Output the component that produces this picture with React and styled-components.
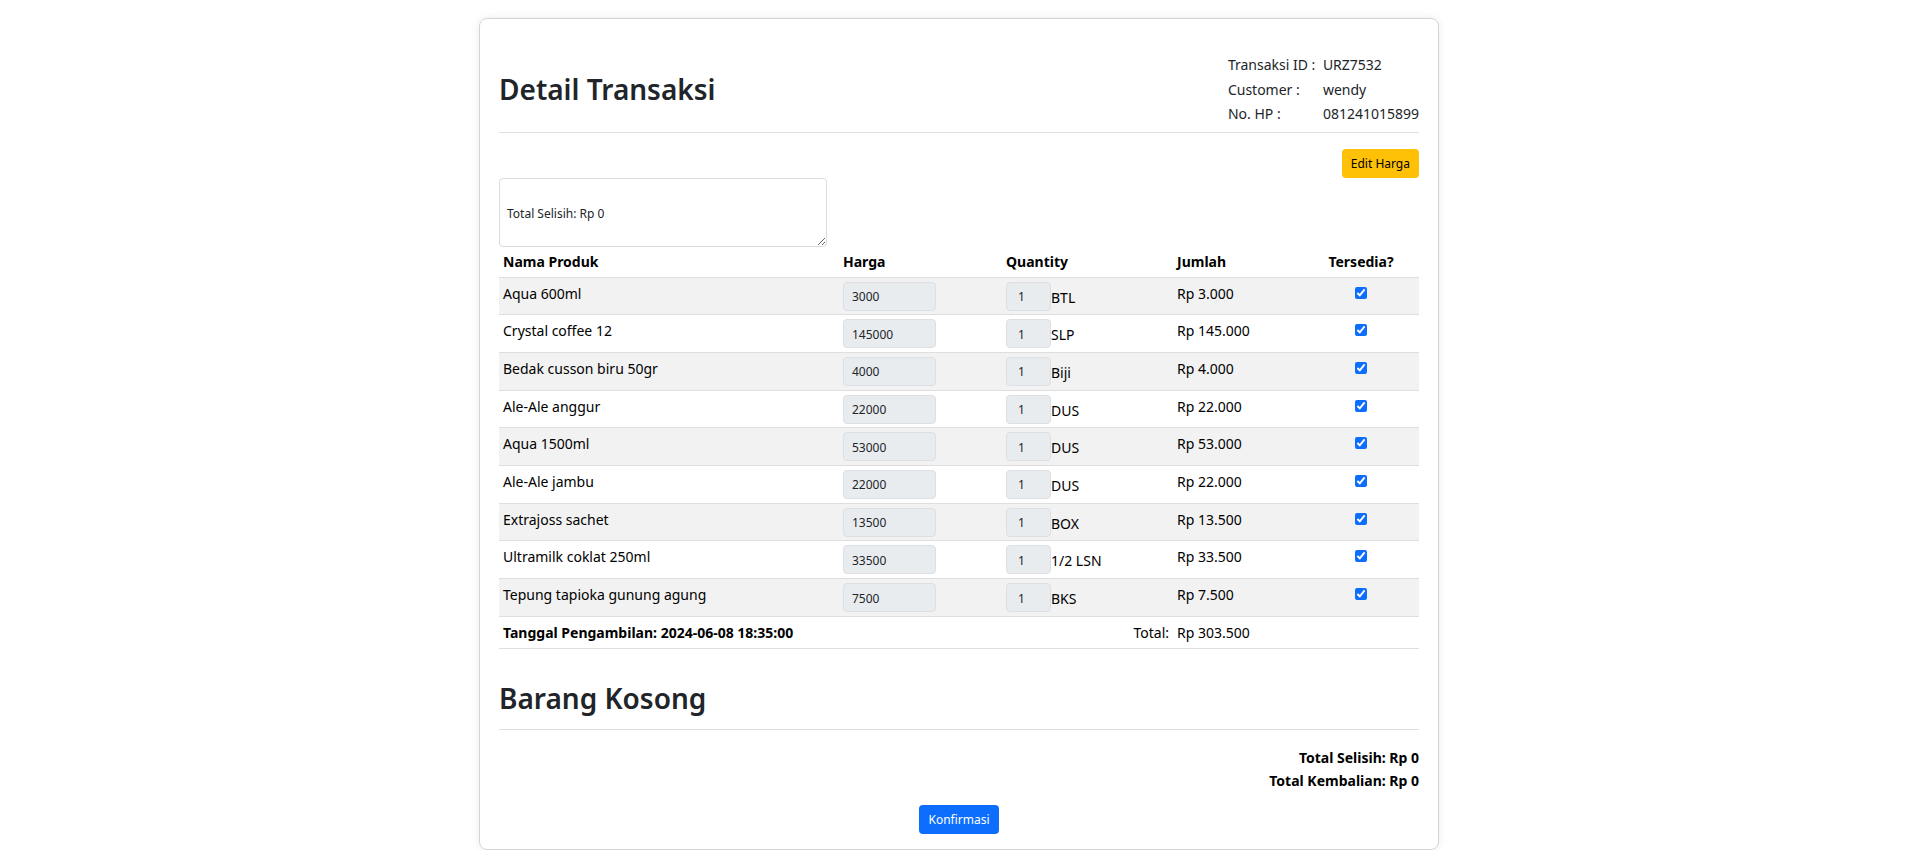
import React from "react";
import styled, { createGlobalStyle } from "styled-components";

const GlobalStyle = createGlobalStyle`
  body {
    margin: 0;
    background: #ffffff;
    font-family: "Noto Sans", "Open Sans", sans-serif;
    color: #212529;
  }
`;

const Page = styled.div`
  padding: 18px 0 0;
`;

const Card = styled.div`
  box-sizing: border-box;
  width: 960px;
  margin: 0 auto;
  padding: 19px 19px 15px;
  border: 1px solid #d4d4d4;
  border-radius: 8px;
  box-shadow: 0 0 8px rgba(0, 0, 0, 0.08);
`;

const Header = styled.div`
  display: flex;
  justify-content: space-between;
  align-items: center;
  padding: 15px 0 5px;
  border-bottom: 1px solid #dedede;
`;

const Title = styled.h2`
  margin: 0;
  font-size: 28px;
  font-weight: 600;
  line-height: 1.2;
  color: #212529;
`;

const Info = styled.div`
  display: grid;
  grid-template-columns: 95px auto;
  font-size: 14px;
  line-height: 24.5px;
  color: #212529;
`;

const Toolbar = styled.div`
  display: flex;
  justify-content: flex-end;
  margin-top: 16px;
`;

const Button = styled.button`
  font-family: inherit;
  font-size: 12px;
  height: 29px;
  padding: 0 9px;
  border: none;
  border-radius: 4px;
  cursor: pointer;
  background: ${({ $variant }) => ($variant === "warning" ? "#ffc107" : "#0d6efd")};
  color: ${({ $variant }) => ($variant === "warning" ? "#000" : "#fff")};
`;

const Note = styled.textarea`
  display: block;
  box-sizing: border-box;
  width: 328px;
  height: 69px;
  padding: 5px 7px;
  border: 1px solid #dcdcdc;
  border-radius: 4px;
  font-family: inherit;
  font-size: 12px;
  line-height: 20px;
  color: #212529;
  resize: both;
  outline: none;
`;

const Table = styled.table`
  width: 920px;
  border-collapse: collapse;
  table-layout: fixed;
  font-size: 14px;
  color: #000;
`;

const Th = styled.th`
  padding: 4px;
  line-height: 22px;
  font-weight: 700;
  text-align: ${({ $center }) => ($center ? "center" : "left")};
  border-bottom: 1px solid #dedede;
`;

const Row = styled.tr`
  background: ${({ $striped }) => ($striped ? "#f2f2f2" : "#fff")};
  border-bottom: 1px solid #dedede;
`;

const Td = styled.td`
  padding: 4px 4px 3.7px;
  line-height: 24px;
  vertical-align: top;
  text-align: ${({ $align }) => $align || "left"};
  font-weight: ${({ $bold }) => ($bold ? 700 : 400)};
`;

const Field = styled.input`
  box-sizing: border-box;
  width: ${({ $w }) => $w}px;
  height: 29px;
  padding: 1px 0 0 ${({ $pad }) => $pad}px;
  margin: 0;
  border: 1px solid #dcdfe3;
  border-radius: 4px;
  background: #e9ecef;
  font-family: inherit;
  font-size: 12px;
  color: #212529;
  vertical-align: top;
`;

const Unit = styled.span`
  display: inline-block;
  padding-top: 4px;
  vertical-align: top;
`;

const Check = styled.input`
  display: block;
  width: 12px;
  height: 12px;
  margin: 5px auto 0;
  accent-color: #0d6efd;
`;

const SectionTitle = styled(Title)`
  margin-top: 33px;
  padding-bottom: 13px;
  border-bottom: 1px solid #dedede;
`;

const Summary = styled.div`
  margin-top: 16px;
  text-align: right;
  font-size: 14px;
  font-weight: 700;
  line-height: 23px;
  color: #000;
`;

const Actions = styled.div`
  display: flex;
  justify-content: center;
  margin-top: 13px;
`;

const items = [
  { name: "Aqua 600ml", harga: 3000, unit: "BTL", jumlah: "Rp 3.000" },
  { name: "Crystal coffee 12", harga: 145000, unit: "SLP", jumlah: "Rp 145.000" },
  { name: "Bedak cusson biru 50gr", harga: 4000, unit: "Biji", jumlah: "Rp 4.000" },
  { name: "Ale-Ale anggur", harga: 22000, unit: "DUS", jumlah: "Rp 22.000" },
  { name: "Aqua 1500ml", harga: 53000, unit: "DUS", jumlah: "Rp 53.000" },
  { name: "Ale-Ale jambu", harga: 22000, unit: "DUS", jumlah: "Rp 22.000" },
  { name: "Extrajoss sachet", harga: 13500, unit: "BOX", jumlah: "Rp 13.500" },
  { name: "Ultramilk coklat 250ml", harga: 33500, unit: "1/2 LSN", jumlah: "Rp 33.500" },
  { name: "Tepung tapioka gunung agung", harga: 7500, unit: "BKS", jumlah: "Rp 7.500" }
];

export default function App() {
  return (
    <Page>
      <GlobalStyle />
      <Card>
        <Header>
          <Title>Detail Transaksi</Title>
          <Info>
            <span>Transaksi ID :</span>
            <span>URZ7532</span>
            <span>Customer :</span>
            <span>wendy</span>
            <span>No. HP :</span>
            <span>081241015899</span>
          </Info>
        </Header>

        <Toolbar>
          <Button $variant="warning">Edit Harga</Button>
        </Toolbar>
        <Note readOnly value={"\nTotal Selisih: Rp 0"} />

        <Table>
          <colgroup>
            <col style={{ width: 340 }} />
            <col style={{ width: 163 }} />
            <col style={{ width: 171 }} />
            <col style={{ width: 130 }} />
            <col style={{ width: 116 }} />
          </colgroup>
          <thead>
            <tr>
              <Th>Nama Produk</Th>
              <Th>Harga</Th>
              <Th>Quantity</Th>
              <Th>Jumlah</Th>
              <Th $center>Tersedia?</Th>
            </tr>
          </thead>
          <tbody>
            {items.map((item, i) => (
              <Row key={item.name} $striped={i % 2 === 0}>
                <Td>{item.name}</Td>
                <Td>
                  <Field $w={93} $pad={8} readOnly value={item.harga} />
                </Td>
                <Td>
                  <Field $w={45} $pad={11} readOnly value={1} />
                  <Unit>{item.unit}</Unit>
                </Td>
                <Td>{item.jumlah}</Td>
                <Td $align="center">
                  <Check type="checkbox" defaultChecked />
                </Td>
              </Row>
            ))}
            <Row>
              <Td colSpan={2} $bold>
                Tanggal Pengambilan: 2024-06-08 18:35:00
              </Td>
              <Td $align="right">Total:</Td>
              <Td>Rp 303.500</Td>
              <Td />
            </Row>
          </tbody>
        </Table>

        <SectionTitle>Barang Kosong</SectionTitle>
        <Summary>
          <div>Total Selisih: Rp 0</div>
          <div>Total Kembalian: Rp 0</div>
        </Summary>
        <Actions>
          <Button>Konfirmasi</Button>
        </Actions>
      </Card>
    </Page>
  );
}
